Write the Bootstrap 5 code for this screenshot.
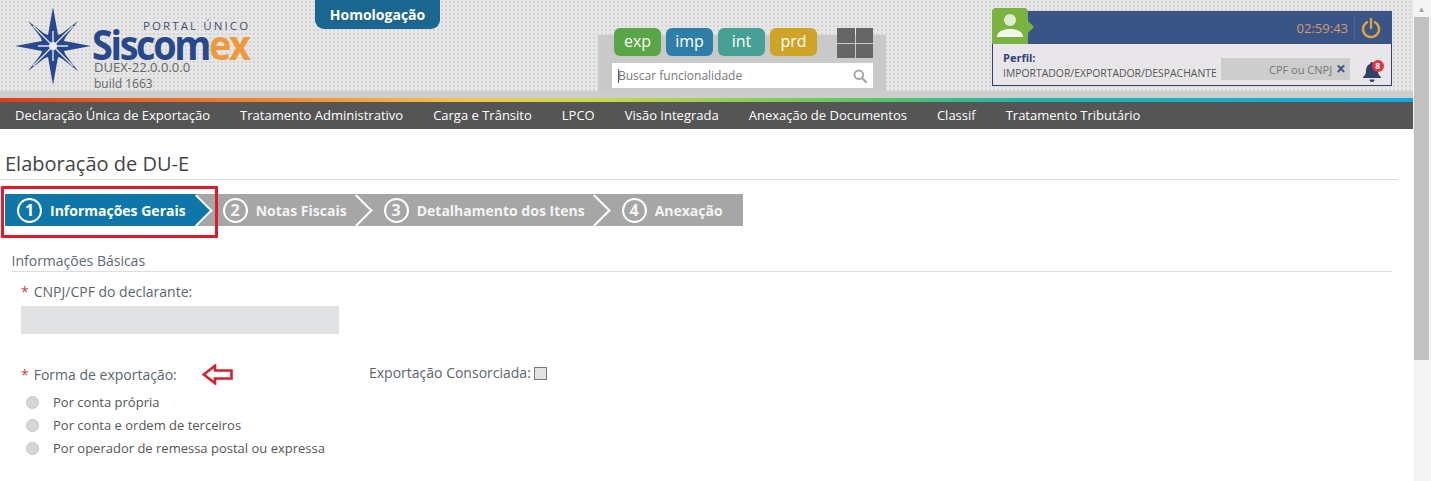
<!DOCTYPE html>
<html lang="pt-BR"><head><meta charset="utf-8"><title>Siscomex</title>
<link href="https://cdn.jsdelivr.net/npm/bootstrap@5.3.0/dist/css/bootstrap.min.css" rel="stylesheet">
<style>
html,body{height:481px;overflow:hidden;margin:0;background:#fff}
body{font-family:"Open Sans",sans-serif;font-size:13px;color:#555}
.shell{height:481px}
.content{width:1413px;flex:none;height:481px;overflow:hidden}
.fake-scroll{width:18px;flex:none;background:#f4f4f4}
.fake-up{height:17px;color:#a3a3a3;font-size:8px;line-height:17px;padding-right:1px}
.fake-thumb{height:343px;background:#c1c1c1;margin:0 2px 0 1px}
.top{height:98px;position:relative;background-color:#e6e6e6;background-image:radial-gradient(circle at 2px 2px,#d4d4d4 1.1px,transparent 1.4px);background-size:4px 4px}
.top-strip{position:absolute;left:0;right:0;bottom:0;height:7px;background:#cdcdcd}
.env-tab{position:absolute;left:315px;top:0;width:125px;height:29px;background:#1b6690;color:#fff;font-weight:700;font-size:14px;border-radius:0 0 9px 9px;text-align:center;line-height:29px}
.logo{position:absolute;left:14px;top:7px;width:240px;height:84px}
.logo-star{position:absolute;left:0;top:0}
.logo-portal{position:absolute;left:129px;top:16px;font-size:11.5px;letter-spacing:2.1px;color:#44536e;line-height:6px;white-space:nowrap}
.logo-name{position:absolute;left:78px;top:22px;font-size:42px;font-weight:700;letter-spacing:-2.6px;line-height:30px;color:#27488c;white-space:nowrap;transform:scaleX(.9);transform-origin:left center}
.logo-name span{color:#ee9a3a}
.logo-ver{position:absolute;left:80px;top:53px;font-size:13px;line-height:15.5px;color:#666}
.logo-ver span{font-size:12px}
.apps{position:absolute;left:598px;top:35px;width:288px;height:56px;background:#c9c9c9;padding:0 13px 0 14px}
.app-row{margin-top:-7px;height:30px;padding-left:2px;gap:5px}
.app-btn{width:47px;height:28px;border-radius:6px;color:#fff;font-size:16px;line-height:27px;text-align:center}
.a1{background:#5aa545}.a2{background:#2f7ea9}.a3{background:#46a093}.a4{background:#cfa325}
.grid-ico{width:36px;height:30px;margin-left:auto;display:grid;grid-template-columns:1fr 1fr;grid-template-rows:1fr 1fr;gap:1px}
.grid-ico i{background:#666;display:block}
.search{height:25px;margin:5px 0 0 0;background:#fff;padding:0 6px;color:#777;font-size:12px;line-height:25px}
.caret-bar{display:inline-block;width:1px;height:14px;background:#555;vertical-align:-3px;margin-right:-1px}
.user{position:absolute;left:992px;top:11px;width:400px;height:75px}
.user-bar{height:33px;background:#3b5488;padding-right:11px}
.clock{color:#d59a66;font-size:13px;padding-right:6px;border-right:1px solid #4d6596;line-height:24px;margin-right:6px}
.avatar{position:absolute;left:0;top:-3px;width:36px;height:36px;background:#79b340;border-radius:4px 4px 0 0}
.avatar::after{content:"";position:absolute;right:-6px;top:13px;border-left:6px solid #79b340;border-top:6px solid transparent;border-bottom:6px solid transparent}
.user-info{height:42px;background:#e8e6e8;border:1px solid #2f3f6f;border-top:0;padding:0 0 0 10px}
.perfil-b{color:#2f4379;font-weight:700;font-size:11px;line-height:14px;padding-top:7px}
.perfil-t{font-size:10.4px;line-height:14px;padding-top:1px;color:#555;white-space:nowrap}
.cpf{width:129px;height:22px;background:#cdcdcd;margin-left:4px;color:#777;font-size:11px;line-height:22px;text-align:right;padding-right:4px;margin-top:14px}
.cpf b{color:#3b5488;font-size:17px;line-height:22px;margin-left:1px;vertical-align:-1px}
.bell{position:relative;width:22px;height:24px;margin-left:12px;margin-top:15px}
.bell-n{position:absolute;left:10px;top:1px;width:12px;height:12px;border-radius:50%;background:#e8323c;color:#fff;font-size:8.5px;font-weight:700;line-height:12px;text-align:center}
.rainbow{height:4px;background:linear-gradient(90deg,#dc3f1e 0,#f08a34 20%,#f2c54c 33%,#c8d84c 42%,#5cc266 62%,#21b5a5 72%,#10a9de 100%)}
.menu{height:27px;background:#555;padding-left:15px;gap:30px;color:#fff;font-size:13px;line-height:27px;white-space:nowrap}
.menu a{color:#fff;text-decoration:none}
.page-h{font-size:20px;line-height:28px;color:#444;margin:21px 15px 0 0;padding:0 0 1px 5px;border-bottom:1px solid #ddd;height:30px;font-weight:400}
.wizard{position:relative;margin:14px 0 0 5px;width:738px;height:32px;background:#a6a6a6}
.wz{position:relative;height:32px;padding:0 10px 0 26px;background:#a6a6a6;color:#f4f4f4;font-weight:700;font-size:14px;white-space:nowrap}
.wz-first{background:#0e76a8;padding-left:12px;padding-right:11px;z-index:3;color:#fff}
.wz-second{z-index:2}.wz-third{z-index:1;padding-left:27px}
.wz-last{padding-left:27px}
.wz::after{content:"";position:absolute;right:-11px;top:4.5px;width:23px;height:23px;background:inherit;border-top:2px solid #fff;border-right:2px solid #fff;transform:rotate(45deg)}
.wz-last::after{display:none}
.wz-num{width:25px;height:25px;border:2px solid #fff;border-radius:50%;font-size:16px;line-height:21px;text-align:center;margin-right:8px;flex:none;position:relative;z-index:1}
.wz-txt{position:relative;z-index:1}
.red-box{position:absolute;left:-4px;top:-8px;width:217px;height:52px;border:3px solid #e01a2b;z-index:5}
.form-area{padding:0 21px 0 12px}
.sec-t{font-size:14px;line-height:20px;color:#5b6a76;margin-top:25px;padding-bottom:1px;border-bottom:1px solid #ddd;height:21px;margin-left:-.5px}
.fld-lab{font-size:14px;line-height:20px;color:#5a6670;white-space:nowrap}
.req{color:#c0493c;margin-right:5px}
.fld1{margin:10px 0 0 9px}
.gray-in{width:318px;height:28px;background:#e1e2e3;margin-top:4px}
.fld2{margin:29px 0 0 9px}
.left-col{width:348px;flex:none;padding-top:1px}
.arrow{margin-left:25px;flex:none}
.chk{width:13px;height:13px;border:1px solid #777;background:#e3e3e3;margin-left:3px;display:block;flex:none}
.rad{font-size:13px;line-height:23px;color:#555;height:23px}
.rad i{display:block;width:13px;height:13px;border-radius:50%;background:#d6d6d6;border:1px solid #c4c4c4;margin:0 14px 0 5px;flex:none}
.rad-list{margin-top:6px}
</style></head>
<body>
<div class="shell d-flex">
<div class="content">
 <header class="top">
  <div class="top-strip"></div>
  <div class="logo">
   <svg class="logo-star" width="78" height="78" viewBox="0 0 78 78" aria-hidden="true">
    <path fill="#27488c" d="M39 0 L44 28 L53 25 L50 34 L77 39 L50 44 L53 53 L44 50 L39 78 L34 50 L25 53 L28 44 L1 39 L28 34 L25 25 L34 28Z"/>
    <path fill="#27488c" d="M14 14 L36 31 L31 36Z M64 14 L47 36 L42 31Z M14 64 L31 42 L36 47Z M64 64 L42 47 L47 42Z"/>
    <path stroke="#dfe4ee" stroke-width="1.4" fill="none" d="M19 19 L59 59 M59 19 L19 59 M39 24 V54 M24 39 H54"/>
    <circle cx="39" cy="39" r="4" fill="#e8ecf4"/>
   </svg>
   <div class="logo-portal">PORTAL ÚNICO</div>
   <div class="logo-name">Siscom<span>ex</span></div>
   <div class="logo-ver">DUEX-22.0.0.0.0<br><span>build 1663</span></div>
  </div>
  <div class="env-tab">Homologação</div>
  <div class="apps">
   <div class="app-row d-flex"><span class="app-btn a1">exp</span><span class="app-btn a2">imp</span><span class="app-btn a3">int</span><span class="app-btn a4">prd</span>
    <span class="grid-ico"><i></i><i></i><i></i><i></i></span></div>
   <div class="search d-flex align-items-center justify-content-between"><span><span class="caret-bar"></span>Buscar funcionalidade</span>
    <svg width="14" height="14" viewBox="0 0 14 14" aria-hidden="true"><circle cx="5.8" cy="5.8" r="4.3" fill="none" stroke="#a8a8a8" stroke-width="2"/><path d="M9 9l4 4" stroke="#a8a8a8" stroke-width="2.4" stroke-linecap="round"/></svg></div>
  </div>
  <div class="user">
   <div class="user-bar d-flex align-items-center justify-content-end">
    <span class="clock">02:59:43</span>
    <svg width="20" height="22" viewBox="0 0 20 22" aria-hidden="true"><path d="M6 5.2a8 8 0 1 0 8 0" fill="none" stroke="#dfa43a" stroke-width="2.4" stroke-linecap="round"/><path d="M10 2v9" stroke="#dfa43a" stroke-width="2.4" stroke-linecap="round"/></svg>
   </div>
   <div class="avatar"><svg width="36" height="36" viewBox="0 0 36 36" aria-hidden="true"><circle cx="18" cy="12" r="6" fill="#dfeccf"/><path d="M5 29c0-6 7-8 13-8s13 2 13 8z" fill="#f3f7ec"/></svg></div>
   <div class="user-info d-flex">
    <div><div class="perfil-b">Perfil:</div><div class="perfil-t">IMPORTADOR/EXPORTADOR/DESPACHANTE</div></div>
    <div class="cpf flex-shrink-0">CPF ou CNPJ <b>×</b></div>
    <div class="bell flex-shrink-0"><svg width="20" height="24" viewBox="0 0 20 24" aria-hidden="true"><path fill="#2f4266" d="M10 3a2 2 0 0 1 2 2c3 1 4 4 4 7 0 3 1 4 3 6v1H1v-1c2-2 3-3 3-6 0-3 1-6 4-7a2 2 0 0 1 2-2zM7.500 20.500h5a2.500 2.500 0 0 1-5 0z"/></svg><span class="bell-n">8</span></div>
   </div>
  </div>
 </header>
 <div class="rainbow"></div>
 <nav class="menu d-flex"><a href="#">Declaração Única de Exportação</a><a href="#">Tratamento Administrativo</a><a href="#">Carga e Trânsito</a><a href="#">LPCO</a><a href="#">Visão Integrada</a><a href="#">Anexação de Documentos</a><a href="#">Classif</a><a href="#">Tratamento Tributário</a></nav>
 <h1 class="page-h">Elaboração de DU-E</h1>
 <div class="wizard d-flex">
  <div class="wz wz-first d-flex align-items-center"><span class="wz-num">1</span><span class="wz-txt">Informações Gerais</span></div>
  <div class="wz wz-second d-flex align-items-center"><span class="wz-num">2</span><span class="wz-txt">Notas Fiscais</span></div>
  <div class="wz wz-third d-flex align-items-center"><span class="wz-num">3</span><span class="wz-txt">Detalhamento dos Itens</span></div>
  <div class="wz wz-last d-flex align-items-center"><span class="wz-num">4</span><span class="wz-txt">Anexação</span></div>
  <div class="red-box"></div>
 </div>
 <section class="form-area">
  <div class="sec-t">Informações Básicas</div>
  <div class="fld1"><div class="fld-lab"><span class="req">*</span>CNPJ/CPF do declarante:</div><div class="gray-in"></div></div>
  <div class="fld2 d-flex">
   <div class="left-col">
    <div class="fld-lab d-flex align-items-center"><span class="req">*</span>Forma de exportação:
     <svg class="arrow" width="31" height="21" viewBox="0 0 31 21" aria-hidden="true"><path d="M1.800 10.500 L13 1.800 V6.500 H29.500 V14.500 H13 V19.200Z" fill="none" stroke="#d8202c" stroke-width="2.600"/></svg></div>
    <div class="rad-list">
     <div class="rad d-flex align-items-center"><i></i>Por conta própria</div>
     <div class="rad d-flex align-items-center"><i></i>Por conta e ordem de terceiros</div>
     <div class="rad d-flex align-items-center"><i></i>Por operador de remessa postal ou expressa</div>
    </div>
   </div>
   <div class="fld-lab d-flex align-items-center align-self-start">Exportação Consorciada:<span class="chk"></span></div>
  </div>
 </section>
</div>
<div class="fake-scroll text-center"><div class="fake-up">▲</div><div class="fake-thumb"></div></div>
</div>
</body></html>
